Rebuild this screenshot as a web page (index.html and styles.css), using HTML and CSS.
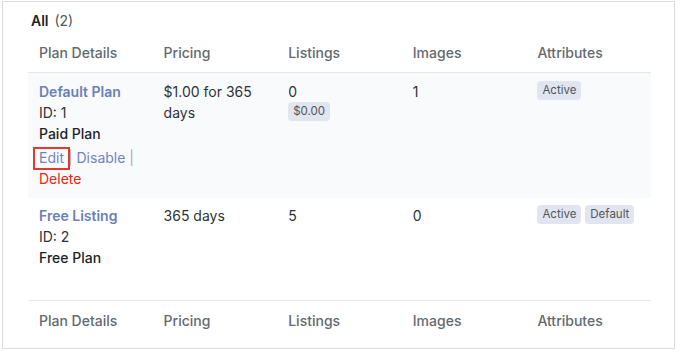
FILE: index.html
```html
<!DOCTYPE html>
<html>
<head>
<meta charset="utf-8">
<link rel="stylesheet" href="styles.css">
</head>
<body>
<div class="frame">
  <div class="views"><span class="current">All</span> <span class="count">(2)</span></div>
  <table class="plans">
    <thead>
      <tr><th>Plan Details</th><th>Pricing</th><th>Listings</th><th>Images</th><th>Attributes</th></tr>
    </thead>
    <tbody>
      <tr class="alt">
        <td class="first">
          <div class="name"><a>Default Plan</a></div>
          <div>ID: 1</div>
          <div class="type">Paid Plan</div>
          <div class="actions"><a class="edit">Edit</a> <span class="sep">|</span> <a>Disable</a> <span class="sep">|</span> <a class="delete">Delete</a></div>
        </td>
        <td>$1.00 for 365 days</td>
        <td><div>0</div><span class="badge">$0.00</span></td>
        <td>1</td>
        <td><span class="badge">Active</span></td>
      </tr>
      <tr class="second">
        <td class="first">
          <div class="name"><a>Free Listing</a></div>
          <div>ID: 2</div>
          <div class="type">Free Plan</div>
        </td>
        <td>365 days</td>
        <td>5</td>
        <td>0</td>
        <td><span class="badge">Active</span> <span class="badge">Default</span></td>
      </tr>
    </tbody>
    <tfoot>
      <tr><th>Plan Details</th><th>Pricing</th><th>Listings</th><th>Images</th><th>Attributes</th></tr>
    </tfoot>
  </table>
</div>
</body>
</html>
```

FILE: styles.css
```css
html, body {
  margin: 0;
  padding: 0;
  background: #ffffff;
}
body {
  font-family: Inter, "Noto Sans", sans-serif;
  font-size: 14px;
  color: #2c3338;
}
.frame {
  margin: 1px 0 0 2px;
  width: 673px;
  height: 348px;
  box-sizing: border-box;
  border: 1px solid #dcdcde;
  padding: 0 21px 0 25px;
  overflow: hidden;
}
.views {
  padding: 9px 0 0 3px;
  line-height: 20px;
  height: 20px;
}
.views .current {
  font-weight: 600;
  color: #1d2327;
}
.views .count {
  color: #50575e;
  margin-left: 2px;
}
.plans {
  margin-top: 5px;
  width: 623px;
  border-collapse: collapse;
  table-layout: fixed;
}
.plans th {
  text-align: left;
  font-weight: 500;
  color: #646970;
  padding: 7px 11px 9px;
  line-height: 20px;
}
.plans thead th {
  border-bottom: 1px solid #e6e7e9;
}
.plans tfoot th {
  border-top: 1px solid #e6e7e9;
  padding-top: 10px;
}
.plans td {
  vertical-align: top;
  padding: 8px 11px 9px;
  line-height: 21px;
}
.plans tr.alt td {
  background: #f9fafb;
}
.plans tr.second td {
  padding-top: 7px;
  padding-bottom: 32px;
}
.name a {
  color: #6b80b8;
  font-weight: 600;
}
.type {
  font-weight: 500;
  color: #1d2327;
}
.actions {
  margin-top: 3px;
  color: #8c96b0;
}
.actions a {
  color: #7085bd;
}
.actions .sep {
  color: #a7aab6;
}
.actions a.delete {
  color: #e3271a;
}
.edit {
  position: relative;
}
.edit::after {
  content: "";
  position: absolute;
  left: -6px;
  right: -6px;
  top: -2px;
  bottom: -4px;
  border: 2px solid #e8372b;
}
.badge {
  display: inline-block;
  background: #e0e5ef;
  color: #50575e;
  font-size: 11.5px;
  font-weight: 400;
  line-height: 19px;
  padding: 0 5px;
  border-radius: 4px;
  vertical-align: top;
}
```
